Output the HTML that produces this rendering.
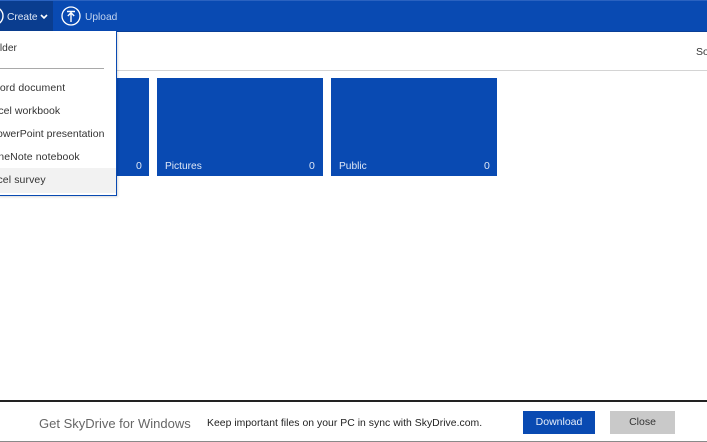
<!DOCTYPE html>
<html><head><meta charset="utf-8">
<style>
html,body{margin:0;padding:0;background:#fff}
#p{position:relative;width:707px;height:442px;overflow:hidden;background:#fff;font-family:"Liberation Sans",sans-serif;font-size:10.5px;color:#333}
#p div,#p span.t{position:absolute;white-space:nowrap}
.t{line-height:14px}
.w{color:#fff}
.b{background:#094ab2}
</style></head><body>
<div id="p">
<div style="left:0;top:0;width:707px;height:32px;background:#094ab2;border-top:1px solid #2a62c0;border-bottom:1px solid #0a3f96;box-sizing:border-box"></div>
<div style="left:0;top:1px;width:53px;height:30px;background:#0a3d8f"></div>
<svg style="position:absolute;left:-16px;top:6px" width="20" height="20"><circle cx="10" cy="10" r="9" fill="none" stroke="#fff" stroke-width="1.4"/></svg>
<div class="t" style="left:7px;top:11px;color:#dfe8f6;font-size:10.2px">Create</div>
<svg style="position:absolute;left:40px;top:14px" width="8" height="6"><path d="M1 1L4 4L7 1" fill="none" stroke="#fff" stroke-width="1.6"/></svg>
<svg style="position:absolute;left:61px;top:6px" width="20" height="20"><circle cx="10" cy="10" r="9" fill="none" stroke="#fff" stroke-width="1.3"/><path d="M6 5.5H14M10 16V7M6.8 10L10 6.8L13.2 10" fill="none" stroke="#fff" stroke-width="1.4"/></svg>
<div class="t" style="left:85px;top:11px;color:#c3d4ef;font-size:10.2px">Upload</div>

<div style="left:0;top:70px;width:707px;height:1px;background:#d4d4d4"></div>
<div class="t" style="left:696px;top:45px;color:#333">Sort</div>

<div class="b" style="left:100px;top:78px;width:49px;height:98px"></div>
<div class="t" style="left:136px;top:159px;color:#dfe8f6">0</div>
<div class="b" style="left:157px;top:78px;width:166px;height:98px"></div>
<div class="t" style="left:165px;top:160px;color:#dfe8f6;font-size:10.2px">Pictures</div>
<div class="t" style="left:309px;top:159px;color:#dfe8f6">0</div>
<div class="b" style="left:331px;top:78px;width:166px;height:98px"></div>
<div class="t" style="left:339px;top:160px;color:#dfe8f6;font-size:10.2px">Public</div>
<div class="t" style="left:484px;top:159px;color:#dfe8f6">0</div>

<div style="left:-2px;top:31px;width:118px;height:164px;background:#fff;border-right:1px solid #094ab2;border-bottom:1px solid #094ab2;box-shadow:1px 1px 2px rgba(0,0,0,.15);overflow:hidden">
  <div class="t" style="left:-10px;top:11px;font-size:10.2px">Folder</div>
  <div style="left:0;top:37px;width:106px;height:1px;background:#a9a9a9"></div>
  <div class="t" style="left:-8px;top:50px;letter-spacing:.1px">Word document</div>
  <div class="t" style="left:-12px;top:73px;letter-spacing:.05px">Excel workbook</div>
  <div class="t" style="left:-8px;top:96px">PowerPoint presentation</div>
  <div class="t" style="left:-8px;top:119px;letter-spacing:.1px">OneNote notebook</div>
  <div style="left:0;top:137px;width:118px;height:25px;background:#f2f2f2"></div>
  <div class="t" style="left:-13px;top:142px;letter-spacing:.1px">Excel survey</div>
</div>

<div style="left:0;top:400px;width:707px;height:2px;background:#222"></div>
<div style="left:0;top:441px;width:707px;height:1px;background:#8a8a8a"></div>
<div class="t" style="left:39px;top:416px;font-size:13px;line-height:16px;color:#666">Get SkyDrive for Windows</div>
<div class="t" style="left:207px;top:417px;color:#222;font-size:10.4px;letter-spacing:.035px">Keep important files on your PC in sync with SkyDrive.com.</div>
<div style="left:523px;top:411px;width:72px;height:23px;background:#094ab2;color:#e6eefa;text-align:center;line-height:22px;font-size:10.5px">Download</div>
<div style="left:610px;top:411px;width:65px;height:23px;background:#c9c9c9;color:#333;text-align:center;line-height:22px;font-size:10.5px">Close</div>
</div>
</body></html>
